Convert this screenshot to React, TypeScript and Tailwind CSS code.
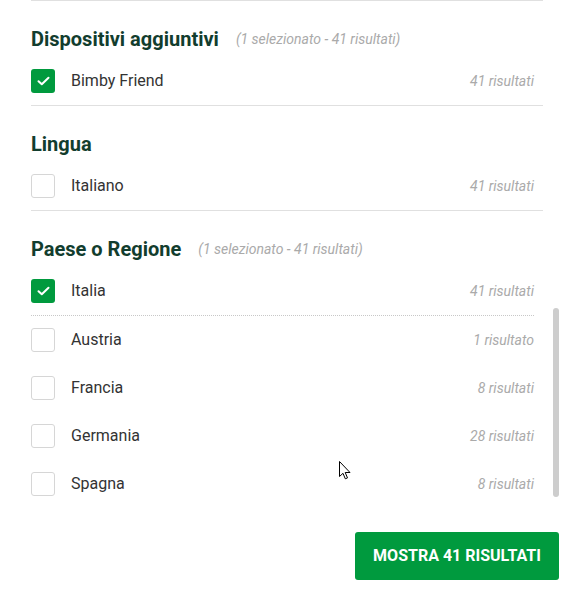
import React from 'react'

type Item = { label: string; count: string; checked?: boolean }

const sections: { title: string; note?: string; items: Item[] }[] = [
  {
    title: 'Dispositivi aggiuntivi',
    note: '(1 selezionato - 41 risultati)',
    items: [{ label: 'Bimby Friend', count: '41 risultati', checked: true }],
  },
  {
    title: 'Lingua',
    items: [{ label: 'Italiano', count: '41 risultati' }],
  },
]

const paesi: Item[] = [
  { label: 'Austria', count: '1 risultato' },
  { label: 'Francia', count: '8 risultati' },
  { label: 'Germania', count: '28 risultati' },
  { label: 'Spagna', count: '8 risultati' },
]

function Checkbox({ checked }: { checked?: boolean }) {
  if (checked) {
    return (
      <span className="w-6 h-6 rounded-[3px] bg-[#009a3e] flex items-center justify-center shrink-0">
        <svg width="13" height="10" viewBox="0 0 13 10" fill="none">
          <path d="M1.5 5.2 4.8 8.3 11.5 1.7" stroke="#fff" strokeWidth="2" strokeLinecap="round" strokeLinejoin="round" />
        </svg>
      </span>
    )
  }
  return <span className="w-6 h-6 rounded-[3px] border border-[#d6d6d6] bg-white shrink-0" />
}

function Row({ item }: { item: Item }) {
  return (
    <div className="h-12 flex items-center pr-[9px]">
      <Checkbox checked={item.checked} />
      <span className="ml-4 text-[16px] text-[#333] leading-none">{item.label}</span>
      <span className="ml-auto text-[14px] italic text-[#aaa]">{item.count}</span>
    </div>
  )
}

function Heading({ title, note }: { title: string; note?: string }) {
  return (
    <div className="flex items-center h-6 mb-1.5">
      <h2 className="text-[20px] font-bold text-[#123d2e] leading-6">{title}</h2>
      {note && <span className="ml-[17px] text-[14px] leading-5 italic text-[#aaa]">{note}</span>}
    </div>
  )
}

export default function App() {
  return (
    <div className="relative w-[586px] h-[605px] bg-white overflow-hidden" style={{ fontFamily: 'Roboto, "Liberation Sans", sans-serif' }}>
      <div className="pl-[31px] w-[543px]">
        {sections.map((s) => (
          <div key={s.title} className="border-t border-[#e0e0e0] pt-[26px]">
            <Heading title={s.title} note={s.note} />
            {s.items.map((it) => (
              <Row key={it.label} item={it} />
            ))}
          </div>
        ))}

        <div className="border-t border-[#e0e0e0] pt-[26px]">
          <Heading title="Paese o Regione" note="(1 selezionato - 41 risultati)" />
          <Row item={{ label: 'Italia', count: '41 risultati', checked: true }} />
          <div className="mr-[9px] border-t border-dotted border-[#c8c8c8]" />
          {paesi.map((it) => (
            <Row key={it.label} item={it} />
          ))}
        </div>
      </div>

      {/* scrollbar */}
      <div className="absolute left-[553px] top-[308px] w-[6px] h-[189px] rounded-[3px] bg-[#cdcdcd]" />

      <div className="flex justify-end pr-[27px] pt-[24px]">
        <button className="h-12 w-[204px] rounded-[3px] bg-[#009a3e] text-white font-bold text-[16px] uppercase">
          Mostra 41 risultati
        </button>
      </div>

      {/* mouse cursor */}
      <svg className="absolute left-[339px] top-[461px]" width="12" height="19" viewBox="0 0 12 19">
        <path d="M0.5 0.5 V15.5 L4 12.3 L6.3 17.8 L8.5 16.9 L6.2 11.5 H11 Z" fill="#fff" stroke="#000" strokeWidth="1" strokeLinejoin="round" />
      </svg>
    </div>
  )
}
